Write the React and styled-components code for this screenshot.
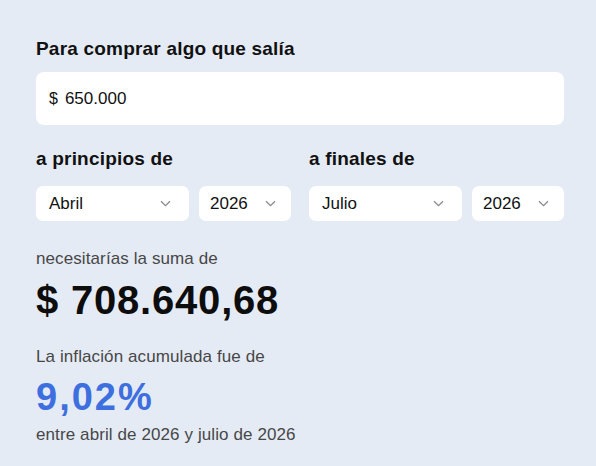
import React from 'react';
import styled, { createGlobalStyle } from 'styled-components';

const GlobalStyle = createGlobalStyle`
  html, body {
    margin: 0;
    padding: 0;
    background: #e5ebf5;
  }
  body {
    font-family: "Liberation Sans", Arial, sans-serif;
    color: #111;
  }
`;

const Page = styled.main`
  width: 596px;
  height: 466px;
  box-sizing: border-box;
  padding: 38px 32px 0 36px;
  display: flex;
  flex-direction: column;
  background: #e5ebf5;
  overflow: hidden;
`;

const Label = styled.h2`
  margin: 0;
  font-size: 19px;
  line-height: 22px;
  font-weight: 700;
  letter-spacing: 0.2px;
  color: #111;
`;

const AmountBox = styled.div`
  margin-top: 12px;
  height: 53px;
  background: #fff;
  border-radius: 8px;
  display: flex;
  align-items: center;
  padding: 0 13px;
  font-size: 17px;
  color: #111;
`;

const Currency = styled.span`
  margin-right: 7px;
  font-size: 16px;
`;

const Periods = styled.div`
  margin-top: 23px;
  display: grid;
  grid-template-columns: 1fr 1fr;
  column-gap: 18px;
`;

const Period = styled.div`
  display: flex;
  flex-direction: column;
  gap: 16px;
`;

const Selects = styled.div`
  display: grid;
  grid-template-columns: 153px 1fr;
  column-gap: 10px;
`;

const SelectBox = styled.div`
  height: 35px;
  background: #fff;
  border-radius: 7px;
  display: flex;
  align-items: center;
  justify-content: space-between;
  padding: ${(p) => (p.$narrow ? '0 15px 0 11px' : '0 18px 0 13px')};
  font-size: 17px;
  color: #111;
`;

const Result = styled.section`
  margin-top: 28px;
  display: flex;
  flex-direction: column;
`;

const Caption = styled.p`
  margin: ${(p) => p.$top || 0} 0 0;
  font-size: 17px;
  line-height: 20px;
  color: #474747;
  letter-spacing: 0.1px;
`;

const BigValue = styled.p`
  margin: ${(p) => p.$top || 0} 0 0;
  font-size: ${(p) => (p.$accent ? '38px' : '40px')};
  line-height: ${(p) => (p.$accent ? '44px' : '46px')};
  font-weight: 700;
  letter-spacing: ${(p) => (p.$accent ? '2px' : '0.8px')};
  color: ${(p) => (p.$accent ? '#3e6fdf' : '#0d0d0d')};
`;

const Chevron = () => (
  <svg width="11" height="7" viewBox="0 0 11 7" fill="none">
    <path d="M1 1.2L5.5 5.6L10 1.2" stroke="#8a8a8a" strokeWidth="1.3" />
  </svg>
);

const Select = ({ value, narrow }) => (
  <SelectBox $narrow={narrow}>
    <span>{value}</span>
    <Chevron />
  </SelectBox>
);

export default function App() {
  return (
    <>
      <GlobalStyle />
      <Page>
        <Label>Para comprar algo que salía</Label>
        <AmountBox>
          <Currency>$</Currency>
          650.000
        </AmountBox>

        <Periods>
          <Period>
            <Label>a principios de</Label>
            <Selects>
              <Select value="Abril" />
              <Select value="2026" narrow />
            </Selects>
          </Period>
          <Period>
            <Label>a finales de</Label>
            <Selects>
              <Select value="Julio" />
              <Select value="2026" narrow />
            </Selects>
          </Period>
        </Periods>

        <Result>
          <Caption>necesitarías la suma de</Caption>
          <BigValue $top="8px">$ 708.640,68</BigValue>
          <Caption $top="24px">La inflación acumulada fue de</Caption>
          <BigValue $accent $top="8px">9,02%</BigValue>
          <Caption $top="6px">entre abril de 2026 y julio de 2026</Caption>
        </Result>
      </Page>
    </>
  );
}
